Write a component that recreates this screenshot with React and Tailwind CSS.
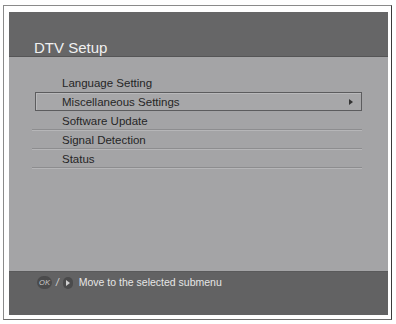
import React from "react";

const MENU = [
  "Language Setting",
  "Miscellaneous Settings",
  "Software Update",
  "Signal Detection",
  "Status",
];

export default function App() {
  const selected = 1;

  return (
    <div className="w-[396px] h-[324px] bg-white pt-[5px] pl-[3px] font-['Liberation_Sans',Arial,sans-serif]">
      {/* outer frame */}
      <div className="w-[389px] h-[315px] border border-[#8a8a8a] border-r-[#3a3a3a] border-b-[#6a6a6a] pt-[6px] pl-[5px] pr-[3px] pb-[4px]">
        <div className="flex flex-col h-full">
          {/* header */}
          <div className="h-[45px] bg-[#666667] border-b border-[#555556] pl-[25px] pt-[28px]">
            <div className="text-[15px] leading-[15px] text-[#f0f0f0]">DTV Setup</div>
          </div>

          {/* body */}
          <div className="flex-1 bg-[#a4a4a6] pt-[16px] pl-[23px] pr-[26px]">
            <div className="flex flex-col">
              {MENU.map((item, i) =>
                i === selected ? (
                  <div
                    key={item}
                    className="ml-[3px] h-[19px] flex items-center justify-between border border-[#5c5c5e] shadow-[inset_1px_1px_0_#b9b9bb] bg-[#a7a7a9] pl-[26px] pr-[8px] pt-[2px]"
                  >
                    <span className="text-[11.5px] text-[#262626]">{item}</span>
                    <span className="-mt-[2px] w-0 h-0 border-y-[3px] border-y-transparent border-l-[4px] border-l-[#333]" />
                  </div>
                ) : (
                  <div
                    key={item}
                    className={`h-[19px] flex items-center pl-[30px] pt-[3px] ${
                      i > selected
                        ? "border-b border-[#8d8d8f] shadow-[0_1px_0_#b6b6b8]"
                        : ""
                    }`}
                  >
                    <span className="text-[11.5px] text-[#262626]">{item}</span>
                  </div>
                )
              )}
            </div>
          </div>

          {/* footer */}
          <div className="h-[44px] bg-[#626263] border-t border-[#5a5a5b] pl-[28px] pt-[4px]">
            <div className="flex items-center h-[13px] gap-[4px]">
              <span className="w-[15px] h-[13px] rounded-full bg-[#4b4b4c] flex items-center justify-center text-[7.5px] italic leading-none text-[#c8c8c8]">
                OK
              </span>
              <span className="text-[10px] italic text-[#d8d8d8] leading-none">/</span>
              <span className="w-[10px] h-[12px] rounded-full bg-[#4b4b4c] flex items-center justify-center">
                <span className="ml-[1px] w-0 h-0 border-y-[3px] border-y-transparent border-l-[4px] border-l-[#d0d0d0]" />
              </span>
              <span className="ml-[2px] text-[10.5px] leading-none text-[#e6e6e6]">
                Move to the selected submenu
              </span>
            </div>
          </div>
        </div>
      </div>
    </div>
  );
}
